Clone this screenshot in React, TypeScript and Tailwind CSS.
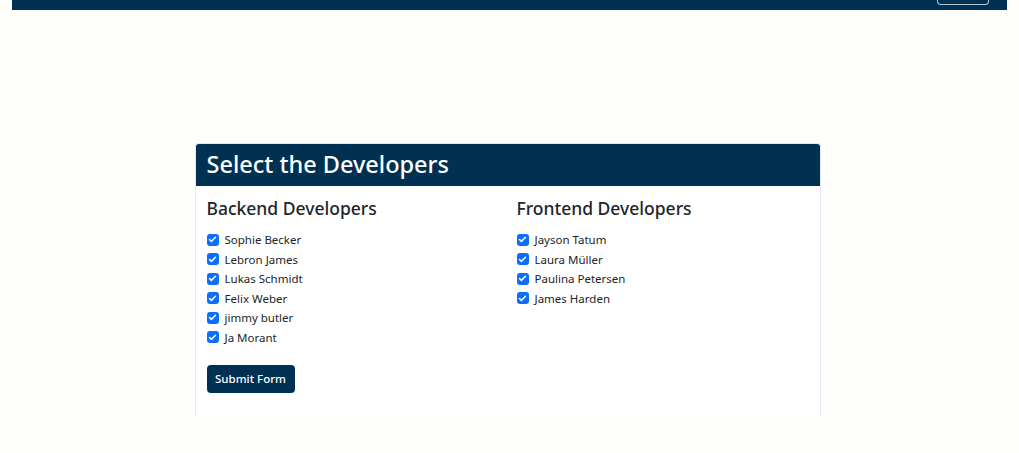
import { Check } from "lucide-react";

const backend = [
  "Sophie Becker",
  "Lebron James",
  "Lukas Schmidt",
  "Felix Weber",
  "jimmy butler",
  "Ja Morant",
];

const frontend = ["Jayson Tatum", "Laura Müller", "Paulina Petersen", "James Harden"];

function DevCheck({ name }: { name: string }) {
  return (
    <label className="flex items-center gap-[6px] h-[19.5px] text-[11.5px] text-[#212529]">
      <span className="w-[12px] h-[12px] rounded-[3px] bg-[#0d6efd] flex items-center justify-center">
        <Check size={9} strokeWidth={4} className="text-white" />
      </span>
      {name}
    </label>
  );
}

export default function App() {
  return (
    <div
      className="min-h-[453px] bg-[#fefffb]"
      style={{ fontFamily: '"Noto Sans", "Open Sans", sans-serif' }}
    >
      {/* top nav strip */}
      <div className="mx-[12px] h-[10px] bg-[#003152] flex justify-end pr-[18px]">
        <div className="w-[52px] h-[5px] border border-t-0 border-[#b8c6d4] rounded-b-[4px]" />
      </div>

      <div className="pt-[133px] flex justify-center">
        <div className="w-[626px] ml-[-4px] bg-white border border-[#e3e6ea] border-b-0 rounded-t-[4px] overflow-hidden">
          <div className="h-[42px] bg-[#003152] px-[11px] flex items-center">
            <h1 className="text-[23.5px] font-medium text-white leading-none">Select the Developers</h1>
          </div>
          <div className="px-[11px] pt-[11px] pb-[24px]">
            <div className="flex">
              <div className="w-[310px]">
                <h2 className="text-[17.5px] font-medium text-[#212529] leading-[22px] mb-[11px]">
                  Backend Developers
                </h2>
                {backend.map((n) => (
                  <DevCheck key={n} name={n} />
                ))}
              </div>
              <div className="flex-1">
                <h2 className="text-[17.5px] font-medium text-[#212529] leading-[22px] mb-[11px]">
                  Frontend Developers
                </h2>
                {frontend.map((n) => (
                  <DevCheck key={n} name={n} />
                ))}
              </div>
            </div>
            <button className="mt-[18px] w-[88px] h-[28px] rounded-[4px] bg-[#003152] text-white text-[11.5px] font-medium">
              Submit Form
            </button>
          </div>
        </div>
      </div>
    </div>
  );
}
